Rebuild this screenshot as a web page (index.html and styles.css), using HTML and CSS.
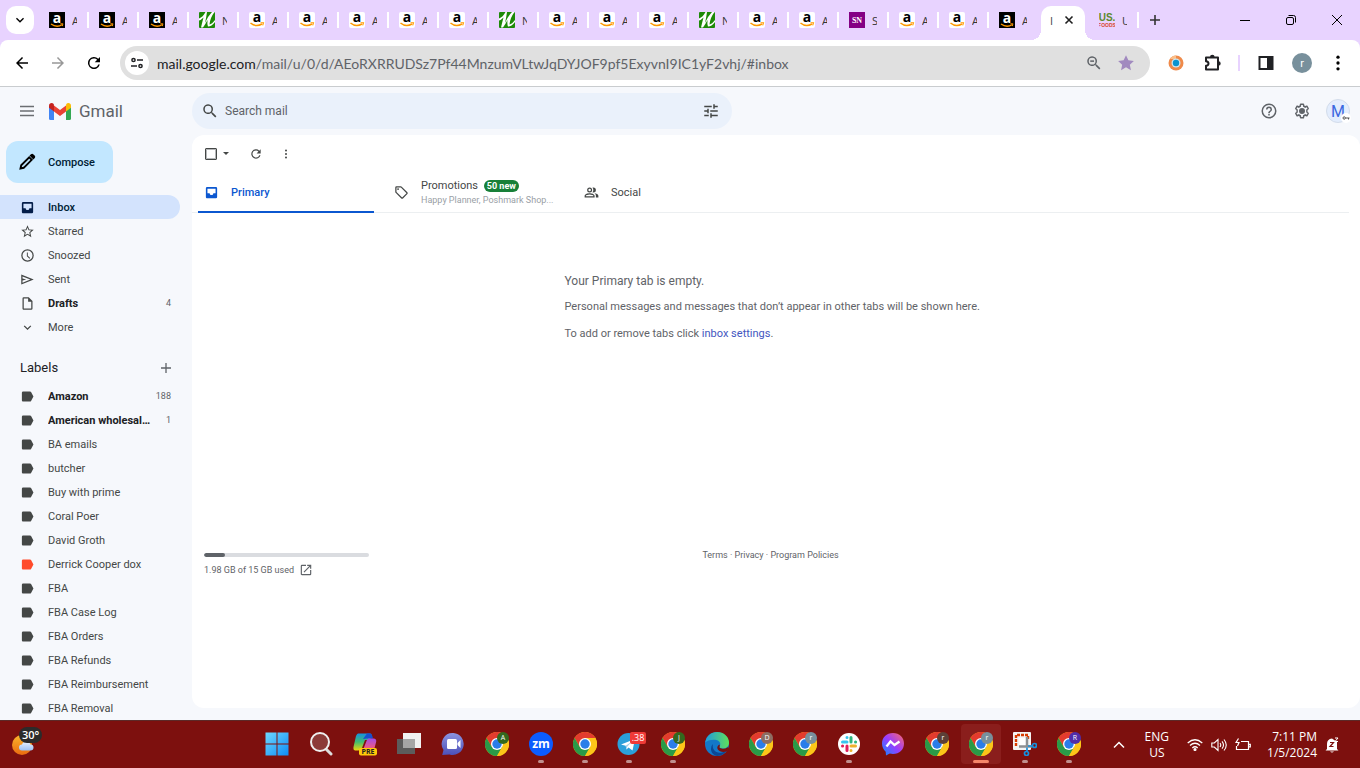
FILE: index.html
```html
<!DOCTYPE html>
<html lang="en">
<head>
    <meta charset="UTF-8">
    <meta name="viewport" content="width=device-width, initial-scale=1.0">
    <title>Inbox - Gmail</title>
    <link rel="stylesheet" href="styles.css">
</head>
<body>
    <svg class="sprite" aria-hidden="true">
        <linearGradient id="g-win" x1="0" y1="0" x2="1" y2="1"><stop offset="0" stop-color="#6fd8ff"/><stop offset="1" stop-color="#0d8cf5"/></linearGradient>
        <linearGradient id="g-meet" x1="0" y1="0" x2="0" y2="1"><stop offset="0" stop-color="#8c95e0"/><stop offset="1" stop-color="#4c4fb8"/></linearGradient>
        <linearGradient id="g-msgr" x1="0" y1="1" x2="1" y2="0"><stop offset="0" stop-color="#0a8dff"/><stop offset=".5" stop-color="#9b3cff"/><stop offset="1" stop-color="#ff6968"/></linearGradient>
        <linearGradient id="g-edge" x1="0" y1="0" x2="1" y2="0"><stop offset="0" stop-color="#1f9be0"/><stop offset="1" stop-color="#5fe05a"/></linearGradient>
        <linearGradient id="g-cop1" x1="0" y1="0" x2="0" y2="1"><stop offset="0" stop-color="#1591e0"/><stop offset=".5" stop-color="#42bd6e"/><stop offset="1" stop-color="#f0d60c"/></linearGradient>
        <linearGradient id="g-cop2" x1="0" y1="0" x2="0" y2="1"><stop offset="0" stop-color="#a24be8"/><stop offset="1" stop-color="#ff5b6c"/></linearGradient>
        <linearGradient id="g-sun" x1="0" y1="0" x2="0" y2="1"><stop offset="0" stop-color="#fbb52c"/><stop offset="1" stop-color="#ea6a10"/></linearGradient>
        <linearGradient id="g-cloud" x1="0" y1="0" x2="0" y2="1"><stop offset="0" stop-color="#eaf3ff"/><stop offset="1" stop-color="#9cc0f4"/></linearGradient>
        <symbol id="fav-amz-dark" viewBox="0 0 16 16">
            <rect width="16" height="16" fill="#000"/>
            <path d="M2 12q5.500 4 11 .8" fill="none" stroke="#f90" stroke-width="1.300"/><path d="M11.400 11.800h2.500l-.6 2.300" fill="none" stroke="#f90"/>
        </symbol>
        <symbol id="fav-amz" viewBox="0 0 16 16">
            <rect width="16" height="16" rx="2" fill="#fff"/>
            <path d="M1.500 11q5.500 4.600 11.500 1" fill="none" stroke="#f90" stroke-width="1.500"/><path d="M11.500 10.800h3l-.8 2.600" fill="none" stroke="#f90" stroke-width="1.100"/>
        </symbol>
        <symbol id="fav-n" viewBox="0 0 16 16">
            <rect width="16" height="16" rx="1" fill="#1d8a08"/>
            <path d="M0 6.500Q4 5 6.500 0H8Q7 7 6 11Q9 4 13 0H15.500Q11 6 10.500 12.500Q13 12 16 8V10Q12.500 14.500 9 14.500Q8 12 8.500 8Q6.500 12 4 15.500H2Q3.500 9 4.500 5.500Q2 8 0 8.500Z" fill="#fff"/>
        </symbol>
        <symbol id="i-down" viewBox="0 0 24 24"><path d="M7.400 8.600 12 13.200l4.600-4.600L18 10l-6 6-6-6z"/></symbol>
        <symbol id="i-back" viewBox="0 0 24 24"><path d="M20 11H7.800l5.600-5.600L12 4l-8 8 8 8 1.400-1.400L7.800 13H20z"/></symbol>
        <symbol id="i-reload" viewBox="0 0 24 24"><path d="M17.650 6.350A8 8 0 1 0 19.730 14h-2.080A6 6 0 1 1 12 6c1.660 0 3.140.69 4.220 1.780L13 11h7V4z"/></symbol>
        <symbol id="i-search" viewBox="0 0 24 24"><path d="M15.500 14h-.79l-.28-.27A6.500 6.500 0 1 0 13.730 14.430l.27.28v.79l5 5L20.490 19zm-6 0a4.500 4.500 0 1 1 0-9 4.500 4.500 0 0 1 0 9z"/></symbol>
        <symbol id="i-dots" viewBox="0 0 24 24"><circle cx="12" cy="5" r="2"/><circle cx="12" cy="12" r="2"/><circle cx="12" cy="19" r="2"/></symbol>
        <symbol id="i-tune" viewBox="0 0 24 24"><path d="M3 17v2h6v-2zM3 5v2h10V5zm10 16v-2h8v-2h-8v-2h-2v6zM7 9v2H3v2h4v2h2V9zm14 4v-2H11v2zm-6-4h2V7h4V5h-4V3h-2z"/></symbol>
        <symbol id="i-help" viewBox="0 0 24 24"><path d="M11 18h2v-2h-2zm1-16a10 10 0 1 0 0 20 10 10 0 0 0 0-20zm0 18a8 8 0 1 1 0-16 8 8 0 0 1 0 16zm0-14a4 4 0 0 0-4 4h2a2 2 0 1 1 4 0c0 2-3 1.750-3 5h2c0-2.250 3-2.500 3-5a4 4 0 0 0-4-4z"/></symbol>
        <symbol id="i-gear" viewBox="0 0 24 24"><path fill-rule="evenodd" d="M13.850 22h-3.700c-.49 0-.91-.36-.98-.84l-.27-1.890c-.53-.27-.79-.42-1.200-.71l-1.780.720a1 1 0 0 1-1.250-.42L2.830 15.660a1 1 0 0 1 .24-1.270l1.510-1.180a8 8 0 0 1 0-2.420L3.070 9.610a.98.980 0 0 1-.24-1.270l1.860-3.220c.25-.43.760-.62 1.210-.43l1.810.73c.39-.28.780-.51 1.180-.7l.28-1.910c.07-.46.490-.81.980-.81h3.700c.490 0 .91.350.98.830l.27 1.890c.46.220.84.440 1.200.71l1.780-.72c.46-.17.980.02 1.220.45l1.850 3.200c.25.420.140.970-.24 1.270l-1.510 1.160c.1.830.100 1.640 0 2.420l1.520 1.190c.38.300.48.840.24 1.260l-1.860 3.220a1 1 0 0 1-1.220.43l-1.800-.73c-.4.290-.8.520-1.200.71l-.27 1.890c-.06.470-.48.820-.96.820zM10.900 20h2.200l.34-2.350c1.100-.35 1.700-.7 2.600-1.500l2.200.9 1.100-1.900-1.900-1.450c.28-1.200.25-2.200 0-3.400l1.900-1.480-1.100-1.900-2.200.92c-.8-.8-1.600-1.250-2.600-1.500L13.100 4h-2.200l-.31 2.350c-1.100.3-1.800.7-2.600 1.500l-2.200-.92-1.100 1.900 1.900 1.460c-.3 1.150-.27 2.250 0 3.400l-1.900 1.480 1.100 1.900 2.200-.94c.9.900 1.600 1.250 2.600 1.520zM12 8a4 4 0 1 0 0 8 4 4 0 0 0 0-8z"/></symbol>
        <symbol id="i-inbox" viewBox="0 0 24 24"><path fill-rule="evenodd" d="M19 3H5a2 2 0 0 0-2 2v14c0 1.100.9 2 2 2h14a2 2 0 0 0 2-2V5a2 2 0 0 0-2-2zm-.5 10H15a3 3 0 0 1-6 0H5.500V6h13z"/></symbol>
        <symbol id="i-star" viewBox="0 0 24 24"><path d="m22 9.240-7.190-.62L12 2 9.190 8.630 2 9.240l5.460 4.730L5.820 21 12 17.270 18.180 21l-1.630-7.030zM12 15.400l-3.760 2.270 1-4.280-3.320-2.880 4.380-.38L12 6.100l1.710 4.040 4.380.38-3.320 2.880 1 4.280z"/></symbol>
        <symbol id="i-clock" viewBox="0 0 24 24"><path d="M12 2a10 10 0 1 0 0 20 10 10 0 0 0 0-20zm0 18a8 8 0 1 1 0-16 8 8 0 0 1 0 16zm.5-13H11v6l4.200 4 1.100-1.200-3.800-3.500z"/></symbol>
        <symbol id="i-send" viewBox="0 0 24 24"><path d="M2 4v16l20-8zm2 3 12.500 5L4 17v-3.500l6-1.500-6-1.500z"/></symbol>
        <symbol id="i-file" viewBox="0 0 24 24"><path d="M14 2H6a2 2 0 0 0-2 2v16c0 1.100.9 2 2 2h12a2 2 0 0 0 2-2V8zM6 20V4h7v5h5v11z"/></symbol>
        <symbol id="i-label" viewBox="0 0 24 24"><path d="M16 4H5a2 2 0 0 0-2 2v12c0 1.100.9 2 2 2h11c.7 0 1.300-.3 1.700-.9L21.500 12l-3.800-7.100A2 2 0 0 0 16 4z"/></symbol>
        <symbol id="i-tag" viewBox="0 0 24 24"><path fill-rule="evenodd" d="M21.400 11.600 12.400 2.600A2 2 0 0 0 11 2H4a2 2 0 0 0-2 2v7c0 .5.200 1 .6 1.400l9 9c.8.8 2 .8 2.800 0l7-7c.8-.8.8-2 0-2.800zM13 20l-9-9V4h7l9 9zM6.500 5a1.500 1.500 0 1 0 0 3 1.500 1.500 0 0 0 0-3z"/></symbol>
        <symbol id="i-people" viewBox="0 0 24 24"><path fill-rule="evenodd" d="M9 12a4 4 0 1 0 0-8 4 4 0 0 0 0 8zm0-6a2 2 0 1 1 0 4 2 2 0 0 1 0-4zm0 7c-2.700 0-8 1.300-8 4v3h16v-3c0-2.700-5.300-4-8-4zm-6 5v-1c0-.7 3.300-2 6-2s6 1.300 6 2v1zM15 12a4 4 0 1 0 0-8c-.5 0-1 .1-1.400.3 1.800 2 1.800 5.400 0 7.400.4.200.9.300 1.400.3zm1.700 1.200c1.400.9 2.300 2.100 2.300 3.800v3h4v-3c0-2.200-3.500-3.500-6.300-3.800z"/></symbol>
        <symbol id="i-open" viewBox="0 0 24 24"><path d="M19 19H5V5h7V3H5a2 2 0 0 0-2 2v14c0 1.100.9 2 2 2h14a2 2 0 0 0 2-2v-7h-2zM14 3v2h3.600l-9.800 9.800 1.400 1.400L19 6.400V10h2V3z"/></symbol>
        <symbol id="i-chrome" viewBox="0 0 24 24">
            <circle cx="12" cy="12" r="12" fill="#fbbc09"/>
            <path d="M1.600 6A12 12 0 0 1 22.400 6H12L6.800 15z" fill="#e33b2e"/>
            <path d="M1.600 6A12 12 0 0 0 12 24L17.200 15 12 12 6.800 15z" fill="#2a9a48"/>
            <path d="M12 6H22.400A12 12 0 0 1 12 24L17.200 15z" fill="#fcc619"/>
            <circle cx="12" cy="12" r="6" fill="#fff"/><circle cx="12" cy="12" r="4.700" fill="#2a7de9"/>
        </symbol>
    </svg>

    <div class="tabstrip">
        <button class="tab-search" aria-label="Search tabs"><svg><use href="#i-down"/></svg></button>
        <div class="tabs">
            <a href="#" class="tab"><svg><use href="#fav-amz-dark"/><text x="8" y="11" class="amz-a light">a</text></svg><span>A</span></a>
            <a href="#" class="tab"><svg><use href="#fav-amz-dark"/><text x="8" y="11" class="amz-a light">a</text></svg><span>A</span></a>
            <a href="#" class="tab"><svg><use href="#fav-amz-dark"/><text x="8" y="11" class="amz-a light">a</text></svg><span>A</span></a>
            <a href="#" class="tab"><svg><use href="#fav-n"/></svg><span>N</span></a>
            <a href="#" class="tab"><svg><use href="#fav-amz"/><text x="8" y="10" class="amz-a">a</text></svg><span>A</span></a>
            <a href="#" class="tab"><svg><use href="#fav-amz"/><text x="8" y="10" class="amz-a">a</text></svg><span>A</span></a>
            <a href="#" class="tab"><svg><use href="#fav-amz"/><text x="8" y="10" class="amz-a">a</text></svg><span>A</span></a>
            <a href="#" class="tab"><svg><use href="#fav-amz"/><text x="8" y="10" class="amz-a">a</text></svg><span>A</span></a>
            <a href="#" class="tab"><svg><use href="#fav-amz"/><text x="8" y="10" class="amz-a">a</text></svg><span>A</span></a>
            <a href="#" class="tab"><svg><use href="#fav-n"/></svg><span>N</span></a>
            <a href="#" class="tab"><svg><use href="#fav-amz"/><text x="8" y="10" class="amz-a">a</text></svg><span>A</span></a>
            <a href="#" class="tab"><svg><use href="#fav-amz"/><text x="8" y="10" class="amz-a">a</text></svg><span>A</span></a>
            <a href="#" class="tab"><svg><use href="#fav-amz"/><text x="8" y="10" class="amz-a">a</text></svg><span>A</span></a>
            <a href="#" class="tab"><svg><use href="#fav-n"/></svg><span>N</span></a>
            <a href="#" class="tab"><svg><use href="#fav-amz"/><text x="8" y="10" class="amz-a">a</text></svg><span>A</span></a>
            <a href="#" class="tab"><svg><use href="#fav-amz"/><text x="8" y="10" class="amz-a">a</text></svg><span>A</span></a>
            <a href="#" class="tab"><svg><rect width="16" height="16" fill="#840084"/><text x="8" y="11" class="sn-text">SN</text></svg><span>S</span></a>
            <a href="#" class="tab"><svg><use href="#fav-amz"/><text x="8" y="10" class="amz-a">a</text></svg><span>A</span></a>
            <a href="#" class="tab"><svg><use href="#fav-amz"/><text x="8" y="10" class="amz-a">a</text></svg><span>A</span></a>
            <a href="#" class="tab no-sep"><svg><use href="#fav-amz-dark"/><text x="8" y="11" class="amz-a light">a</text></svg><span>A</span></a>
            <div class="tab-active"><span>I</span><button aria-label="Close tab"><svg viewBox="0 0 10 10"><path d="M1.500 1.500l7 7M8.500 1.500l-7 7" stroke="#1f1f1f" stroke-width="1.600"/></svg></button></div>
            <a href="#" class="tab"><svg><text x="8" y="9" class="us-text">US.</text><text x="8" y="15" class="foods-text">FOODS</text></svg><span>U</span></a>
        </div>
        <button class="new-tab" aria-label="New tab"><svg viewBox="0 0 12 12"><path d="M6 1v10M1 6h10" stroke="#333" stroke-width="1.600"/></svg></button>
        <div class="win-controls">
            <button aria-label="Minimize"><svg viewBox="0 0 12 12"><path d="M1 6.500h10" stroke="#000"/></svg></button>
            <button aria-label="Restore"><svg viewBox="0 0 12 12"><rect x="1.500" y="3.500" width="7" height="7" rx="1.500" fill="none" stroke="#000"/><path d="M3.500 1.500h5q2 0 2 2v5" fill="none" stroke="#000"/></svg></button>
            <button aria-label="Close"><svg viewBox="0 0 12 12"><path d="M1 1l10 10M11 1 1 11" stroke="#000"/></svg></button>
        </div>
    </div>

    <div class="toolbar">
        <button aria-label="Back"><svg><use href="#i-back"/></svg></button>
        <button class="forward" aria-label="Forward"><svg><use href="#i-back"/></svg></button>
        <button aria-label="Reload"><svg><use href="#i-reload"/></svg></button>
        <div class="omnibox">
            <button class="site-info" aria-label="Site information"><svg viewBox="0 0 14 12"><circle cx="3.500" cy="3" r="1.600"/><path d="M7 3h6M1 9h6"/><circle cx="10.500" cy="9" r="1.600"/></svg></button>
            <span class="url"><b>mail.google.com</b>/mail/u/0/d/AEoRXRRUDSz7Pf44MnzumVLtwJqDYJOF9pf5ExyvnI9IC1yF2vhj/#inbox</span>
            <button class="zoom-out" aria-label="Zoom"><svg viewBox="0 0 24 24"><use href="#i-search"/><path d="M7 8.500h5v2H7z"/></svg></button>
            <button class="bookmark" aria-label="Bookmark"><svg viewBox="0 0 24 24"><path d="M12 1.500 15.200 8.400l7.300.8-5.400 5 1.500 7.300L12 17.800l-6.600 3.700 1.500-7.300-5.400-5 7.300-.8z"/></svg></button>
        </div>
        <div class="extensions">
            <button aria-label="Extension"><svg class="ext" viewBox="0 0 16 16"><circle cx="8" cy="8" r="7.500" fill="#ef8a4a"/><path d="M2 4A7.500 7.500 0 0 1 8 .5V4z" fill="#fbc08a"/><circle cx="8" cy="8" r="4.500" fill="#cfe6ef"/><circle cx="8" cy="8" r="3.200" fill="#0b93cf"/></svg></button>
            <button aria-label="Extensions"><svg viewBox="0 0 20 20"><path d="M4 4.500h12v12H4v-3.700q2.500-.3 2.500-2.300T4 8.200z" fill="none" stroke="#202124" stroke-width="2" stroke-linejoin="round"/><path d="M8 4a2.300 2.300 0 0 1 4.600 0zM16.500 8.200a2.200 2.200 0 0 1 0 4.400z" fill="#202124"/></svg></button>
            <span class="divider"></span>
            <button aria-label="Side panel"><svg viewBox="0 0 20 20"><rect x="3.500" y="4" width="13" height="12" fill="none" stroke="#202124" stroke-width="2"/><path d="M11 4h6v12h-6z" fill="#202124"/></svg></button>
            <button class="profile">r</button>
            <button aria-label="Menu"><svg><use href="#i-dots"/></svg></button>
        </div>
    </div>

    <div class="gmail">
        <header class="header">
            <div class="brand">
                <button aria-label="Main menu"><svg viewBox="0 0 18 18"><path d="M2 4.500h14M2 9h14M2 13.500h14" stroke="#6b6e72" stroke-width="1.500"/></svg></button>
                <a href="#" class="logo">
                    <svg viewBox="0 0 22 17"><path d="M0 3v12.500Q0 17 1.500 17H5V7z" fill="#4285f4"/><path d="M22 3v12.500q0 1.500-1.500 1.500H17V7z" fill="#34a853"/><path d="M17 2.500v6l5-3.700V2.800C22 .2 19.200-.7 17.300.9z" fill="#fbbc04"/><path d="M5 8.500v-6L11 7l6-4.500v6L11 13z" fill="#ea4335"/><path d="M0 2.800v2l5 3.700v-6L4.700.9C2.800-.7 0 .2 0 2.800z" fill="#c5221f"/></svg>
                    <span>Gmail</span>
                </a>
            </div>
            <form class="search">
                <button type="button" aria-label="Search"><svg><use href="#i-search"/></svg></button>
                <input type="text" placeholder="Search mail" aria-label="Search mail">
                <button type="button" aria-label="Show search options"><svg><use href="#i-tune"/></svg></button>
            </form>
            <div class="account">
                <button aria-label="Support"><svg><use href="#i-help"/></svg></button>
                <button aria-label="Settings"><svg><use href="#i-gear"/></svg></button>
                <button class="avatar">M<svg viewBox="0 0 10 10"><circle cx="5" cy="5" r="5" fill="#fff"/><circle cx="3.200" cy="5" r="1.200" fill="none" stroke="#555"/><path d="M4.500 5H8.500M7.500 5v1.500" stroke="#555"/></svg></button>
            </div>
        </header>

        <div class="columns">
            <nav class="sidebar">
                <button class="compose"><svg viewBox="0 0 18 18"><path d="M2.500 15.500l.7-3.200 8-8 2.500 2.500-8 8z" fill="none" stroke="#000" stroke-width="1.900"/><path d="M11.500 2.500 13 1.200q1.200-1 2.500.2l1.100 1.100q1.200 1.300.2 2.500L15.300 6.500z"/></svg>Compose</button>
                <ul>
                    <li class="current"><a href="#"><svg><use href="#i-inbox"/></svg><span>Inbox</span></a></li>
                    <li><a href="#"><svg><use href="#i-star"/></svg><span>Starred</span></a></li>
                    <li><a href="#"><svg><use href="#i-clock"/></svg><span>Snoozed</span></a></li>
                    <li><a href="#"><svg><use href="#i-send"/></svg><span>Sent</span></a></li>
                    <li class="unread"><a href="#"><svg><use href="#i-file"/></svg><span>Drafts</span><i>4</i></a></li>
                    <li><a href="#"><svg><use href="#i-down"/></svg><span>More</span></a></li>
                </ul>
                <div class="labels-head">
                    <h2>Labels</h2>
                    <button aria-label="Create new label"><svg viewBox="0 0 12 12"><path d="M6 1v10M1 6h10" stroke="#5f6368" stroke-width="1.300"/></svg></button>
                </div>
                <ul>
                    <li class="unread"><a href="#"><svg><use href="#i-label"/></svg><span>Amazon</span><i>188</i></a></li>
                    <li class="unread"><a href="#"><svg><use href="#i-label"/></svg><span>American wholesalers</span><i>1</i></a></li>
                    <li><a href="#"><svg><use href="#i-label"/></svg><span>BA emails</span></a></li>
                    <li><a href="#"><svg><use href="#i-label"/></svg><span>butcher</span></a></li>
                    <li><a href="#"><svg><use href="#i-label"/></svg><span>Buy with prime</span></a></li>
                    <li><a href="#"><svg><use href="#i-label"/></svg><span>Coral Poer</span></a></li>
                    <li><a href="#"><svg><use href="#i-label"/></svg><span>David Groth</span></a></li>
                    <li class="red"><a href="#"><svg><use href="#i-label"/></svg><span>Derrick Cooper dox</span></a></li>
                    <li><a href="#"><svg><use href="#i-label"/></svg><span>FBA</span></a></li>
                    <li><a href="#"><svg><use href="#i-label"/></svg><span>FBA Case Log</span></a></li>
                    <li><a href="#"><svg><use href="#i-label"/></svg><span>FBA Orders</span></a></li>
                    <li><a href="#"><svg><use href="#i-label"/></svg><span>FBA Refunds</span></a></li>
                    <li><a href="#"><svg><use href="#i-label"/></svg><span>FBA Reimbursement</span></a></li>
                    <li><a href="#"><svg><use href="#i-label"/></svg><span>FBA Removal</span></a></li>
                </ul>
            </nav>

            <main class="card">
                <div class="actions">
                    <input type="checkbox" aria-label="Select">
                    <button class="caret" aria-label="Select options"></button>
                    <button class="refresh" aria-label="Refresh"><svg><use href="#i-reload"/></svg></button>
                    <button class="more" aria-label="More"><svg><use href="#i-dots"/></svg></button>
                </div>
                <div class="mail-tabs">
                    <button class="mail-tab selected"><svg><use href="#i-inbox"/></svg><span>Primary</span></button>
                    <button class="mail-tab"><svg><use href="#i-tag"/></svg><span>Promotions <b>50 new</b><small>Happy Planner, Poshmark Shop...</small></span></button>
                    <button class="mail-tab"><svg><use href="#i-people"/></svg><span>Social</span></button>
                </div>
                <div class="empty">
                    <h1>Your Primary tab is empty.</h1>
                    <p>Personal messages and messages that don’t appear in other tabs will be shown here.</p>
                    <p>To add or remove tabs click <a href="#">inbox settings</a>.</p>
                </div>
                <footer class="foot">
                    <div class="storage">
                        <div class="meter"><div class="meter-used" style="width: 13%"></div></div>
                        <a href="#">1.98 GB of 15 GB used <svg><use href="#i-open"/></svg></a>
                    </div>
                    <div class="policies"><a href="#">Terms</a> · <a href="#">Privacy</a> · <a href="#">Program Policies</a></div>
                </footer>
            </main>
        </div>
    </div>

    <div class="taskbar">
        <button class="weather"><svg viewBox="0 0 32 32"><circle cx="11" cy="16" r="10" fill="url(#g-sun)"/><path d="M11 21.500a3 3 0 0 1 0-6q1-3.500 5-3 3 .5 3.500 3a3 3 0 0 1 0 6z" fill="url(#g-cloud)"/></svg><span>30°</span></button>
        <div class="apps">
            <button aria-label="Start"><svg viewBox="0 0 24 24"><path d="M.5.5h11v11H.5zM12.500.5h11v11h-11zM.5 12.500h11v11H.5zM12.500 12.500h11v11h-11z" fill="url(#g-win)"/></svg></button>
            <button aria-label="Search"><svg viewBox="0 0 24 24"><path d="M16.500 16.500l5.500 5.500" stroke="#ddd" stroke-width="3" stroke-linecap="round"/><circle cx="11" cy="10" r="9" fill="#8c3a38" stroke="#eee" stroke-width="2"/></svg></button>
            <button aria-label="Copilot"><svg viewBox="0 0 24 24"><path d="M5 1.500h12q2 0 1.500 2L17 8h-5l-3 8q-1 2.500-4 2.500H2Q0 18 .5 15L3 4Q4 1.500 5 1.500z" fill="url(#g-cop1)"/><path d="M14 1.500h3q2 0 3 5h-6l-4 .5z" fill="#174fd0"/><path d="M15.500 6.500H21q3 .5 2 4L21 18H10l3.500-9q.7-2.500 2-2.500z" fill="url(#g-cop2)"/><rect x="6" y="16" width="18" height="7.500" rx="2" fill="#ffc90a"/><text x="15" y="22" class="pre-text">PRE</text></svg></button>
            <button aria-label="Task view"><svg viewBox="0 0 24 24"><path d="M0 7h18v15H0z" fill="#5c5c5c"/><path d="M6 1h18v15H6z" fill="#f1f1f1"/><path d="M6 7h12v9H6z" fill="#a6a6a6"/></svg></button>
            <button aria-label="Chat"><svg viewBox="0 0 24 24"><path d="M12.500 1a11 11 0 1 1-4 21.500L1.200 23l1.300-5A11 11 0 0 1 12.500 1z" fill="url(#g-meet)"/><rect x="6" y="7" width="10" height="10" rx="1.500" fill="#fff"/><path d="M16.500 11 19.500 8v8l-3-3z" fill="#fff"/></svg></button>
            <button aria-label="Chrome, A"><svg viewBox="0 0 24 24"><use href="#i-chrome"/></svg><em class="p-green">A</em></button>
            <button class="running" aria-label="Zoom"><svg viewBox="0 0 24 24"><circle cx="12" cy="12" r="12" fill="#0b5cff"/><text x="12" y="16" class="zm-text">zm</text></svg></button>
            <button class="running" aria-label="Chrome"><svg viewBox="0 0 24 24"><use href="#i-chrome"/></svg></button>
            <button class="running" aria-label="Telegram"><svg viewBox="0 0 24 24"><circle cx="11.500" cy="12" r="11" fill="#2ba0da"/><path d="M4 12.500 18 7l-2.500 11.500-4-3-2 2-.8-3.700z" fill="#fff"/><path d="M8.700 13.800 15 9.500l-4.800 5.200-.7 2.800z" fill="#9fd0ea"/></svg><em class="count">.38</em></button>
            <button class="running" aria-label="Chrome, J"><svg viewBox="0 0 24 24"><use href="#i-chrome"/></svg><em class="p-green">J</em></button>
            <button aria-label="Edge"><svg viewBox="0 0 24 24"><circle cx="12" cy="12" r="12" fill="#1378c8"/><path d="M.2 10.500C1.500 4 6 0 12 0c7 0 12 5 12 10.500 0 4-3 6-6 6-2.500 0-4-1-3.500-2 1.500-2 1-5.500-3-6.500C7 7 2 8.500.2 10.500z" fill="url(#g-edge)"/><path d="M8 12c-1.500 5 3 10 9 8.500 2-.5 4-1.500 4.700-2.200C19.500 22 16 24 12.500 24 8 23.500 6 20 6 17q0-3.500 2-5z" fill="#0c4795"/><path d="M14.500 12.500q.8 1.500-.2 2.700 1 1.300 3.200 1.500 3 .2 5-1.500l1.500 1-2 3q-4 1.500-7 0c-3-1.500-4-4.500-.5-6.700z" fill="#7a100e"/></svg></button>
            <button aria-label="Chrome, D"><svg viewBox="0 0 24 24"><use href="#i-chrome"/></svg><em class="p-taupe">D</em></button>
            <button aria-label="Chrome, r"><svg viewBox="0 0 24 24"><use href="#i-chrome"/></svg><em class="p-slate">r</em></button>
            <button class="running" aria-label="Slack"><svg viewBox="0 0 24 24"><circle cx="12" cy="12" r="11" fill="#fff"/><g fill="none" stroke-width="3" stroke-linecap="round"><path d="M10 5.500v.1M5.500 10H10" stroke="#36c5f0"/><path d="M14 5.500V10M18.500 10h.1" stroke="#2eb67d"/><path d="M14 14h4.500M14 18.500v.1" stroke="#ecb22e"/><path d="M10 14v4.500M5.500 14h.1" stroke="#e01e5a"/></g></svg></button>
            <button aria-label="Messenger"><svg viewBox="0 0 24 24"><path d="M12 1c6.500 0 11 4.500 11 10.500S18.500 22 12 22q-1.800 0-3.200-.4L5 23.500l-.3-3.800C2.400 17.600 1 15 1 11.500 1 5.500 5.500 1 12 1z" fill="url(#g-msgr)"/><path d="M5.500 14.500 9.500 9.500l4 3.500 5-3.500" fill="none" stroke="#fff" stroke-width="2.300"/></svg></button>
            <button aria-label="Chrome, r"><svg viewBox="0 0 24 24"><use href="#i-chrome"/></svg><em class="p-brown">r</em></button>
            <button class="running focused" aria-label="Chrome, r"><svg viewBox="0 0 24 24"><use href="#i-chrome"/></svg><em class="p-slate">r</em></button>
            <button class="running" aria-label="Snipping Tool"><svg viewBox="0 0 24 24"><rect width="18" height="18" rx="1" fill="#f4f4f4"/><path d="M3 14V3h12v5" fill="none" stroke="#d83b01" stroke-width="2.400" stroke-dasharray="3 1"/><rect x="6" y="6" width="7.500" height="8" fill="#fff"/><path d="M14 5v10M6 14.500h13" stroke="#8c8f92" stroke-width="2.500"/><g fill="none" stroke="#1490df" stroke-width="1.700"><circle cx="21.500" cy="13.500" r="2"/><circle cx="13.500" cy="21.500" r="2"/><path d="M14 19.500v-4M19.500 14H15"/></g></svg></button>
            <button class="running" aria-label="Chrome, R"><svg viewBox="0 0 24 24"><use href="#i-chrome"/></svg><em class="p-purple">R</em></button>
        </div>
        <div class="tray">
            <button class="chev" aria-label="Show hidden icons"><svg viewBox="0 0 12 12"><path d="M1 8.500 6 3.500l5 5" fill="none" stroke="#fff" stroke-width="1.500"/></svg></button>
            <button class="lang">ENG<br>US</button>
            <button class="status" aria-label="Network, volume, battery">
                <svg viewBox="0 0 16 16" fill="none" stroke="#fff" stroke-width="1.200"><path d="M.7 6q7.300-6.500 14.600 0M3 8.500q5-4.500 10 0M5.300 11q2.700-2.500 5.400 0"/><circle cx="8" cy="12.500" r="1" fill="#fff"/></svg>
                <svg viewBox="0 0 16 16" fill="none" stroke="#fff" stroke-width="1.100"><path d="M.8 6v4h2.500L7 13.500v-11L3.300 6zM9 6q1.500 2 0 4M11 4.300q3 3.700 0 7.400M13 2.500q4.500 5.500 0 11"/></svg>
                <svg viewBox="0 0 16 16" fill="none" stroke="#fff" stroke-width="1.200"><path d="M6 4.500h7.500v8h-12V9M14 7.300h1.300v2.500H14M3.500 1.500 1 5.500h3L2.500 9"/></svg>
            </button>
            <button class="clock">7:11 PM<br>1/5/2024</button>
            <button class="bell" aria-label="Notifications"><svg viewBox="0 0 16 16"><path d="M3 12V7q0-5 5-5.500L13 5v7l1.500 1.500h-13zM6 14.500h4q-2 2-4 0z" fill="#fff"/><path d="M6 5.500h3.500L6 9.500h3.500" fill="none" stroke="#7d100e" stroke-width="1.200"/><path d="M11 1h3l-3 3.500h3" fill="none" stroke="#fff"/></svg></button>
        </div>
    </div>
</body>
</html>
```

FILE: styles.css
```css
* {
    box-sizing: border-box;
}
body {
    margin: 0;
    height: 100vh;
    display: flex;
    flex-direction: column;
    overflow: hidden;
    background: #f6f8fc;
    color: #444746;
    font-family: Roboto, "Liberation Sans", sans-serif;
    font-size: 11px;
}
button {
    border: 0;
    padding: 0;
    background: none;
    color: inherit;
    font: inherit;
    display: flex;
    align-items: center;
    justify-content: center;
}
a {
    color: inherit;
    text-decoration: none;
}
svg {
    width: 18px;
    height: 18px;
    flex: none;
}
.sprite {
    position: absolute;
    width: 0;
    height: 0;
}

/* icon lettering */
.amz-a {
    font: bold 14px "Open Sans", sans-serif;
    text-anchor: middle;
}
.amz-a.light {
    fill: #fff;
}
.sn-text {
    font: bold 8px "Liberation Serif", serif;
    fill: #fff;
    text-anchor: middle;
}
.us-text {
    font: bold 10px "Liberation Sans", sans-serif;
    fill: #5c8a2c;
    text-anchor: middle;
}
.foods-text {
    font: bold 5px "Liberation Sans", sans-serif;
    fill: #d8452c;
    text-anchor: middle;
}
.pre-text {
    font: bold 7px "Open Sans", sans-serif;
    fill: #222;
    text-anchor: middle;
}
.zm-text {
    font: bold 12px "Open Sans", sans-serif;
    fill: #fff;
    text-anchor: middle;
}

/* browser tabs */
.tabstrip {
    display: flex;
    height: 48px;
    margin-bottom: -8px;
    padding-bottom: 8px;
    background: #e8d3ff;
    font-family: "Open Sans", sans-serif;
    flex: none;
}
.tab-search {
    width: 28px;
    height: 28px;
    margin: 6px 5px 0 6px;
    border-radius: 10px;
    background: #fff;
}
.tab-search svg {
    width: 16px;
    height: 16px;
}
.tabs {
    display: flex;
}
.tab {
    display: flex;
    align-items: center;
    width: 50px;
    height: 40px;
    padding-left: 10px;
}
.tab svg {
    width: 16px;
    height: 16px;
    margin-right: 7px;
}
.tab span {
    width: 5px;
    overflow: hidden;
    color: #333;
}
.tab::after {
    content: "";
    width: 2px;
    height: 16px;
    margin-left: auto;
    background: #fff;
}
.tab.no-sep::after {
    display: none;
}
.tab-active {
    position: relative;
    display: flex;
    align-items: center;
    justify-content: space-between;
    width: 44px;
    height: 34px;
    margin: 6px 4px 0 2px;
    padding: 0 11px 6px 9px;
    border-radius: 10px 10px 0 0;
    background: #fff;
}
.tab-active::before, .tab-active::after {
    content: "";
    position: absolute;
    bottom: 0;
    width: 10px;
    height: 10px;
}
.tab-active::before {
    right: 100%;
    background: radial-gradient(circle at 0 0, transparent 10px, #fff 10px);
}
.tab-active::after {
    left: 100%;
    background: radial-gradient(circle at 100% 0, transparent 10px, #fff 10px);
}
.tab-active span {
    width: 3px;
    overflow: hidden;
}
.tab-active svg {
    width: 10px;
    height: 10px;
}
.new-tab {
    width: 32px;
}
.new-tab svg, .win-controls svg {
    width: 12px;
    height: 12px;
}
.win-controls {
    display: flex;
    margin-left: auto;
}
.win-controls button {
    width: 46px;
}

/* address bar */
.toolbar {
    position: relative;
    display: flex;
    align-items: center;
    height: 47px;
    padding: 0 12px 0 4px;
    background: #fff;
    border-bottom: 1px solid #c9cccf;
    border-radius: 8px 8px 0 0;
    flex: none;
}
.toolbar > button {
    width: 36px;
    color: #202124;
}
.toolbar .forward {
    transform: scaleX(-1);
    opacity: .4;
}
.omnibox {
    flex: 1;
    min-width: 0;
    display: flex;
    align-items: center;
    height: 34px;
    margin-left: 8px;
    padding: 0 15px 0 5px;
    border-radius: 17px;
    background: #e0e0e0;
    gap: 14px;
}
.site-info {
    width: 24px;
    height: 24px;
    margin-right: -6px;
    border-radius: 50%;
    background: #fff;
}
.site-info svg {
    width: 14px;
    height: 12px;
    fill: none;
    stroke: #202124;
    stroke-width: 1.500;
}
.url {
    flex: 1;
    font: 14px Lato, sans-serif;
    color: #5f6368;
    white-space: nowrap;
    overflow: hidden;
}
.url b {
    font-weight: normal;
    color: #202124;
}
.zoom-out {
    fill: #5f6368;
}
.bookmark {
    fill: #a18abf;
}
.extensions {
    display: flex;
    align-items: center;
    justify-content: space-between;
    width: 182px;
    margin-left: 16px;
}
.extensions svg {
    width: 20px;
    height: 20px;
}
.extensions .ext {
    width: 16px;
    height: 16px;
    margin: 0 2px;
}
.divider {
    width: 2px;
    height: 16px;
    background: #e8d3ff;
}
.profile {
    width: 20px;
    height: 20px;
    border-radius: 50%;
    background: #78909c;
    color: #fff;
}

/* gmail header */
.gmail {
    flex: 1;
    min-height: 0;
    display: flex;
    flex-direction: column;
}
.header {
    display: flex;
    align-items: center;
    height: 48px;
    padding-right: 10px;
    flex: none;
}
.brand {
    display: flex;
    align-items: center;
    width: 192px;
    padding-left: 18px;
    gap: 13px;
}
.logo {
    display: flex;
    align-items: center;
    gap: 8px;
    font: 17px Roboto, sans-serif;
    color: #5f6368;
}
.logo svg {
    width: 22px;
    height: 17px;
}
.search {
    display: flex;
    align-items: center;
    flex: 0 1 540px;
    height: 36px;
    padding: 0 12px 0 9px;
    border-radius: 18px;
    background: #eaf1fb;
    fill: #444746;
}
.search input {
    flex: 1;
    min-width: 0;
    border: 0;
    padding: 0 6px;
    background: none;
    font: 12px Roboto, sans-serif;
}
.search input::placeholder {
    color: #5f6368;
}
.account {
    display: flex;
    align-items: center;
    gap: 15px;
    margin-left: auto;
    fill: #5f6368;
}
.avatar {
    position: relative;
    width: 24px;
    height: 24px;
    border: 1px solid #d3dcea;
    border-radius: 50%;
    background: #e3edfd;
    color: #3b68e0;
    font-size: 16px;
}
.avatar svg {
    position: absolute;
    right: -2px;
    bottom: -1px;
    width: 10px;
    height: 10px;
}

/* folders and labels */
.columns {
    flex: 1;
    min-height: 0;
    display: flex;
}
.sidebar {
    width: 192px;
    flex: none;
    padding-top: 6px;
    overflow: hidden;
}
.compose {
    height: 42px;
    margin: 0 0 12px 6px;
    padding: 0 18px 0 12px;
    gap: 12px;
    border-radius: 12px;
    background: #c2e7ff;
    color: #001d35;
    font-weight: 500;
}
.sidebar ul {
    margin: 0;
    padding: 0;
    list-style: none;
}
.sidebar li {
    width: 180px;
    fill: #444746;
}
.sidebar li a {
    display: flex;
    align-items: center;
    height: 24px;
    padding: 0 9px 0 20px;
    gap: 13px;
}
.sidebar li svg {
    width: 15px;
    height: 15px;
}
.sidebar li span {
    flex: 0 1 106px;
    overflow: hidden;
    text-overflow: ellipsis;
    white-space: nowrap;
}
.sidebar li i {
    margin-left: auto;
    font-style: normal;
    font-size: 9px;
    color: #5f6368;
}
.sidebar .current {
    border-radius: 0 12px 12px 0;
    background: #d3e3fd;
    color: #001d35;
    fill: #041e49;
    font-weight: 500;
}
.sidebar .unread span {
    color: #202124;
    font-weight: bold;
}
.sidebar .red {
    fill: #ff4b2b;
}
.labels-head {
    display: flex;
    align-items: center;
    justify-content: space-between;
    width: 180px;
    height: 45px;
    padding: 12px 8px 0 20px;
}
.labels-head h2 {
    margin: 0;
    font-size: 13px;
    font-weight: normal;
    color: #202124;
}
.labels-head svg {
    width: 12px;
    height: 12px;
}

/* message pane */
.card {
    flex: 1;
    margin-bottom: 12px;
    padding-right: 11px;
    border-radius: 12px;
    background: #fff;
}
.actions {
    display: flex;
    align-items: center;
    height: 37px;
    padding-left: 13px;
    fill: #444746;
}
.actions input {
    appearance: none;
    width: 12px;
    height: 12px;
    margin: 0;
    border: 1px solid #444746;
    border-radius: 1px;
    outline: 1px solid #b4b6b8;
    outline-offset: -2px;
}
.actions svg {
    width: 14px;
    height: 14px;
}
.actions .more svg {
    width: 12px;
    height: 12px;
}
.caret {
    margin: 0 20px 0 6px;
    border: 3px solid transparent;
    border-top-color: #444746;
    border-bottom: 0;
}
.refresh {
    margin-right: 17px;
}
.mail-tabs {
    display: flex;
    height: 41px;
    border-bottom: 1px solid #eceff1;
}
.mail-tab {
    position: relative;
    width: 190px;
    padding-left: 12px;
    justify-content: flex-start;
    gap: 12px;
    text-align: left;
    white-space: nowrap;
    fill: #444746;
}
.mail-tab svg {
    width: 15px;
    height: 15px;
}
.mail-tab b {
    display: inline-block;
    margin-left: 3px;
    padding: 0 3px;
    border-radius: 6px;
    background: #188038;
    color: #fff;
    font-size: 9px;
    line-height: 12px;
}
.mail-tab small {
    display: block;
    margin-top: 3px;
    font-size: 9px;
    color: #9aa0a6;
}
.selected {
    color: #0b57d0;
    fill: #0b57d0;
    font-weight: 500;
}
.selected::after {
    content: "";
    position: absolute;
    left: 6px;
    right: 8px;
    bottom: -1px;
    height: 2px;
    background: #0b57d0;
}
.empty {
    width: 412px;
    margin: 60px auto 0;
    white-space: nowrap;
    color: #5f6368;
}
.empty h1 {
    margin: 0 0 11px;
    font-size: 12px;
    line-height: 16px;
    font-weight: normal;
}
.empty p {
    margin: 0 0 13px;
    line-height: 14px;
}
.empty a {
    color: #4356c0;
}
.foot {
    display: grid;
    grid-template-columns: 1fr auto 1fr;
    margin: 209px 12px 0;
    font-size: 9px;
    color: #5f6368;
}
.storage {
    padding-top: 3px;
}
.meter {
    width: 165px;
    height: 4px;
    border-radius: 2px;
    background: #dadce0;
    overflow: hidden;
}
.meter-used {
    height: 4px;
    border-radius: 2px;
    background: #5f6368;
}
.storage a {
    display: flex;
    align-items: center;
    gap: 5px;
    margin-top: 6px;
    fill: #5f6368;
}
.storage svg {
    width: 14px;
    height: 14px;
}

/* taskbar */
.taskbar {
    display: grid;
    grid-template-columns: 1fr auto 1fr;
    height: 48px;
    padding-right: 14px;
    flex: none;
    border-top: 1px solid #5c2a28;
    background: #7d100e;
    color: #fff;
    font-family: "Open Sans", sans-serif;
}
.weather {
    position: relative;
    width: 32px;
    margin-left: 11px;
}
.weather svg {
    width: 32px;
    height: 32px;
}
.weather span {
    position: absolute;
    left: 8px;
    top: 6px;
    padding: 0 3px;
    border-radius: 8px;
    background: #2b2b2b;
    line-height: 16px;
    font-weight: 600;
}
.apps {
    display: flex;
    align-items: center;
    gap: 4px;
    padding-bottom: 1px;
}
.apps button {
    position: relative;
    width: 40px;
    height: 40px;
}
.apps svg {
    width: 24px;
    height: 24px;
}
.apps em {
    position: absolute;
    top: 8px;
    right: 8px;
    width: 12px;
    height: 12px;
    border-radius: 50%;
    font-size: 7px;
    line-height: 12px;
    font-style: normal;
    text-align: center;
}
.apps .count {
    right: 3px;
    width: 16px;
    border-radius: 2px;
    background: #f03a37;
    font-size: 9px;
    line-height: 11px;
}
.apps .p-green { background: #33691e; }
.apps .p-taupe { background: #8d6e63; }
.apps .p-slate { background: #78909c; }
.apps .p-brown { background: #5d4037; }
.apps .p-purple { background: #512da8; }
.running::after {
    content: "";
    position: absolute;
    left: 17px;
    right: 17px;
    bottom: 1px;
    height: 3px;
    border-radius: 2px;
    background: #c08f8e;
}
.apps .focused {
    border-radius: 4px;
    background: #8a1e1c;
}
.focused::after {
    left: 12px;
    right: 12px;
    background: #f5866a;
}
.tray {
    display: flex;
    align-items: center;
    justify-content: flex-end;
    padding-right: 6px;
    font-size: 12px;
    line-height: 16px;
}
.tray svg {
    width: 16px;
    height: 16px;
}
.tray .chev svg {
    width: 12px;
    height: 12px;
}
.lang {
    margin: 0 18px 0 20px;
}
.status {
    gap: 8px;
}
.clock {
    margin: 0 7px 0 16px;
    text-align: right;
}
```
